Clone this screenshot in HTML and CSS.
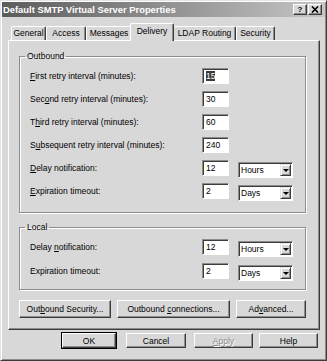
FILE: index.html
```html
<!DOCTYPE html>
<html lang="en">
  <head>
    <meta charset="UTF-8" />
    <title>Default SMTP Virtual Server Properties</title>
    <link rel="stylesheet" href="styles.css">
  </head>
  <body>
    <div class="window">
      <div class="titlebar">
        <span class="title">Default SMTP Virtual Server Properties</span>
        <div class="caption-btns">
          <span class="cap-btn">?</span>
          <span class="cap-btn close">
            <svg width="8" height="7" viewBox="0 0 8 7"><path d="M1 0.5 L7 6.5 M7 0.5 L1 6.5" stroke="#000" stroke-width="1.6"/></svg>
          </span>
        </div>
      </div>

      <div class="client">
        <div class="tabs">
          <div class="tab t-general">General</div>
          <div class="tab t-access">Access</div>
          <div class="tab t-messages">Messages</div>
          <div class="tab t-delivery active">Delivery</div>
          <div class="tab t-ldap">LDAP Routing</div>
          <div class="tab t-security">Security</div>
        </div>

        <div class="panel">
          <fieldset class="group outbound">
            <legend>Outbound</legend>
            <div class="row">
              <label><u>F</u>irst retry interval (minutes):</label>
              <span class="edit"><span class="selected">15</span></span>
            </div>
            <div class="row">
              <label>Sec<u>o</u>nd retry interval (minutes):</label>
              <span class="edit">30</span>
            </div>
            <div class="row">
              <label>T<u>h</u>ird retry interval (minutes):</label>
              <span class="edit">60</span>
            </div>
            <div class="row">
              <label>S<u>u</u>bsequent retry interval (minutes):</label>
              <span class="edit">240</span>
            </div>
            <div class="row">
              <label><u>D</u>elay notification:</label>
              <span class="edit">12</span>
              <span class="combo"><span class="combo-text">Hours</span><span class="combo-btn"></span></span>
            </div>
            <div class="row">
              <label><u>E</u>xpiration timeout:</label>
              <span class="edit">2</span>
              <span class="combo"><span class="combo-text">Days</span><span class="combo-btn"></span></span>
            </div>
          </fieldset>

          <fieldset class="group local">
            <legend>Local</legend>
            <div class="row">
              <label>Delay <u>n</u>otification:</label>
              <span class="edit">12</span>
              <span class="combo"><span class="combo-text">Hours</span><span class="combo-btn"></span></span>
            </div>
            <div class="row">
              <label>Expiration timeout:</label>
              <span class="edit">2</span>
              <span class="combo"><span class="combo-text">Days</span><span class="combo-btn"></span></span>
            </div>
          </fieldset>

          <div class="panel-btns">
            <button class="btn b-security">Out<u>b</u>ound Security...</button>
            <button class="btn b-connections">Outbound <u>c</u>onnections...</button>
            <button class="btn b-advanced">Ad<u>v</u>anced...</button>
          </div>
        </div>

        <div class="dialog-btns">
          <button class="btn b-ok">OK</button>
          <button class="btn b-cancel">Cancel</button>
          <button class="btn b-apply" disabled><u>A</u>pply</button>
          <button class="btn b-help">Help</button>
        </div>
      </div>
    </div>
  </body>
</html>
```

FILE: styles.css
```css
body {
  margin: 0;
  font-family: "Liberation Sans", Arial, sans-serif;
  font-size: 8.5px;
  color: #000;
  background-color: #d8d8d8;
}
.window {
  width: 327px;
  height: 361px;
  box-sizing: border-box;
  background-color: #d8d8d8;
  border: 1px solid;
  border-color: #e4e4e4 #3c3c3c #3c3c3c #e4e4e4;
  box-shadow: inset 1px 1px 0 #fff, inset -1px -1px 0 #8c8c8c;
  padding: 1px;
}
.titlebar {
  height: 15px;
  display: flex;
  align-items: center;
  justify-content: space-between;
  padding-right: 3px;
  background: linear-gradient(to right, #5c5c5c, #9a9a9a 60%, #c6c6c6);
}
.title {
  color: #fff;
  font-weight: bold;
  font-size: 9.4px;
  padding-left: 1px;
  white-space: nowrap;
}
.caption-btns {
  display: flex;
  gap: 1px;
}
.cap-btn {
  width: 12px;
  height: 9px;
  display: flex;
  align-items: center;
  justify-content: center;
  background-color: #d8d8d8;
  border: 1px solid;
  border-color: #fff #3c3c3c #3c3c3c #fff;
  box-shadow: inset -1px -1px 0 #8c8c8c;
  font-weight: bold;
  font-size: 8px;
}
.client {
  padding: 6px 5px 0 6px;
}
.tabs {
  display: flex;
  align-items: flex-end;
  height: 17px;
  padding-left: 3px;
}
.tab {
  height: 14px;
  box-sizing: border-box;
  line-height: 13px;
  text-align: center;
  border: 1px solid;
  border-bottom: none;
  border-color: #fff #3c3c3c #fff #fff;
  box-shadow: inset -1px 0 0 #8c8c8c;
  border-radius: 2px 2px 0 0;
  white-space: nowrap;
}
.tab.active {
  height: 18px;
  line-height: 15px;
  margin: 0 -1px -1px -2px;
  padding-bottom: 2px;
  position: relative;
  z-index: 1;
  background-color: #d8d8d8;
}
.t-general { width: 35px; }
.t-access { width: 40px; }
.t-messages { width: 46px; }
.t-delivery { width: 44px; }
.t-ldap { width: 63px; }
.t-security { width: 39px; }

.panel {
  height: 290px;
  box-sizing: border-box;
  border: 1px solid;
  border-color: #fff #3c3c3c #3c3c3c #fff;
  box-shadow: inset -1px -1px 0 #8c8c8c;
  padding: 10px 13px 0 10px;
}
.group {
  margin: 0;
  padding: 7px 2px 13px 10px;
  border: 1px solid #8c8c8c;
  box-shadow: 1px 1px 0 #fff, inset 1px 1px 0 #fff;
  min-width: 0;
}
.group legend {
  line-height: 10px;
  padding: 0 2px;
  margin-left: -5px;
}
.local {
  margin-top: 9px;
  padding-top: 7px;
  padding-bottom: 10px;
}
.row {
  display: grid;
  grid-template-columns: 163px 27px 55px;
  column-gap: 9px;
  align-items: start;
  height: 16px;
  margin-bottom: 7px;
}
.local .row {
  margin-bottom: 8px;
}
.row:last-child {
  margin-bottom: 0;
}
.row label {
  line-height: 16px;
  white-space: nowrap;
}
.edit {
  height: 16px;
  box-sizing: border-box;
  background-color: #fff;
  border: 1px solid;
  border-color: #8c8c8c #fff #fff #8c8c8c;
  box-shadow: inset 1px 1px 0 #3c3c3c;
  padding-left: 3px;
  line-height: 14px;
}
.selected {
  background-color: #3a3a3a;
  color: #fff;
}
.combo {
  height: 16px;
  margin-top: 2px;
  box-sizing: border-box;
  display: flex;
  background-color: #fff;
  border: 1px solid;
  border-color: #8c8c8c #fff #fff #8c8c8c;
  box-shadow: inset 1px 1px 0 #3c3c3c;
  padding: 1px 1px 1px 2px;
}
.combo-text {
  flex: 1;
  line-height: 13px;
}
.combo-btn {
  width: 11px;
  box-sizing: border-box;
  background-color: #d8d8d8;
  border: 1px solid;
  border-color: #e4e4e4 #3c3c3c #3c3c3c #e4e4e4;
  box-shadow: inset 1px 1px 0 #fff, inset -1px -1px 0 #8c8c8c;
  display: flex;
  align-items: center;
  justify-content: center;
}
.combo-btn::after {
  content: "";
  border-left: 3px solid transparent;
  border-right: 3px solid transparent;
  border-top: 3px solid #000;
}
.btn {
  font-family: inherit;
  font-size: 8.5px;
  color: #000;
  background-color: #d8d8d8;
  border: 1px solid;
  border-color: #fff #3c3c3c #3c3c3c #fff;
  box-shadow: inset -1px -1px 0 #8c8c8c;
  padding: 0;
  border-radius: 0;
}
.panel-btns {
  display: flex;
  gap: 6px;
  margin-top: 10px;
}
.panel-btns .btn {
  height: 18px;
  flex-shrink: 0;
}
.b-security { width: 92px; }
.b-connections { width: 113px; }
.b-advanced { width: 70px; }
.dialog-btns {
  display: flex;
  justify-content: flex-end;
  margin-top: 3px;
  padding-right: 2px;
}
.dialog-btns .btn {
  height: 15px;
}
.b-ok {
  width: 54px;
  margin-right: 10px;
  outline: 1px solid #000;
}
.b-cancel {
  width: 60px;
  margin-right: 8px;
}
.b-apply {
  width: 59px;
  margin-right: 6px;
}
.b-help {
  width: 59px;
}
.btn:disabled {
  color: #8c8c8c;
  text-shadow: 1px 1px 0 #fff;
}
```
